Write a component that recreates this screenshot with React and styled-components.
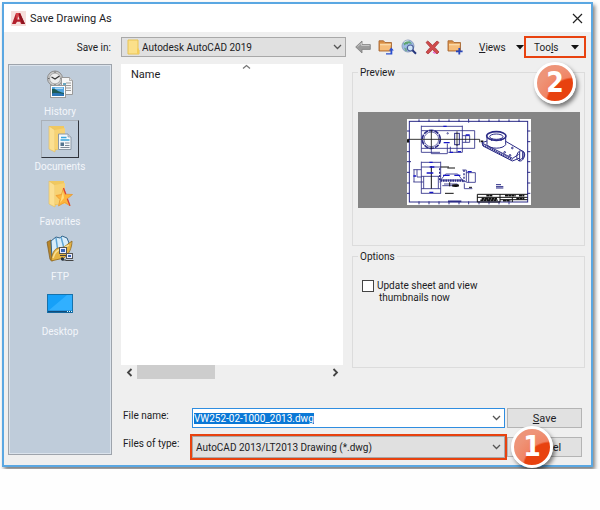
import React, { useEffect, useRef, useState } from "react";
import styled, { createGlobalStyle } from "styled-components";

const face = "#efefef";
const ink = "#1c1c24";
const accent = "#e8420f";
const winBlue = "#5aa7e2";
const navy = "#2b2b86";

const folders = ["Autodesk AutoCAD 2019"];
const fileTypes = ["AutoCAD 2013/LT2013 Drawing (*.dwg)"];

export default function App() {
  const [current, setCurrent] = useState("Documents");
  const [fileName, setFileName] = useState("VW252-02-1000_2013.dwg");
  const nameInput = useRef(null);

  useEffect(() => {
    nameInput.current.focus();
    nameInput.current.select();
  }, []);

  return (
    <>
      <GlobalStyle />
      <Dialog role="dialog" aria-labelledby="dialog-title">
        <TitleBar>
          <AppLogo />
          <Title id="dialog-title">Save Drawing As</Title>
          <CloseButton aria-label="Close">
            <CloseIcon />
          </CloseButton>
        </TitleBar>

        <Toolbar>
          <SaveInLabel htmlFor="save-in">Save in:</SaveInLabel>
          <Combo>
            <ComboIcon>
              <SmallFolder />
            </ComboIcon>
            <Select id="save-in" $indent>
              {folders.map(name => (
                <option key={name}>{name}</option>
              ))}
            </Select>
            <ComboArrow>
              <Chevron />
            </ComboArrow>
          </Combo>
          <Tools>
            <IconButton aria-label="Back">
              <BackIcon />
            </IconButton>
            <IconButton aria-label="Up one level">
              <FolderIcon up />
            </IconButton>
            <IconButton aria-label="Search the Web">
              <GlobeIcon />
            </IconButton>
            <IconButton aria-label="Delete">
              <DeleteIcon />
            </IconButton>
            <IconButton aria-label="Create New Folder">
              <FolderIcon />
            </IconButton>
            <Spacer />
            <MenuButton>
              <span>
                <u>V</u>iews
              </span>
              <Triangle />
            </MenuButton>
            <Callout>
              <MenuButton $marked>
                <span>
                  Too<u>l</u>s
                </span>
                <Triangle />
              </MenuButton>
              <StepBadge $below>2</StepBadge>
            </Callout>
          </Tools>
        </Toolbar>

        <Content>
          <Places>
            {places.map(({ name, Icon }) => (
              <Place key={name} onClick={() => setCurrent(name)}>
                <PlaceIcon $active={name === current}>
                  <Icon />
                </PlaceIcon>
                <PlaceName>{name}</PlaceName>
              </Place>
            ))}
          </Places>

          <Main>
            <Browser>
              <FileList>
                <Files>
                  <thead>
                    <tr>
                      <NameHead scope="col">
                        Name
                        <SortMark>
                          <Chevron up />
                        </SortMark>
                      </NameHead>
                    </tr>
                  </thead>
                </Files>
                <ScrollBar>
                  <ScrollArrow aria-label="Scroll left">
                    <ScrollChevron left />
                  </ScrollArrow>
                  <Track>
                    <Thumb />
                  </Track>
                  <ScrollArrow aria-label="Scroll right">
                    <ScrollChevron />
                  </ScrollArrow>
                </ScrollBar>
              </FileList>

              <Side>
                <Group>
                  <Legend>Preview</Legend>
                  <PreviewArea>
                    <Drawing />
                  </PreviewArea>
                </Group>
                <Group $grow>
                  <Legend>Options</Legend>
                  <CheckRow>
                    <CheckBox type="checkbox" id="thumbs" />
                    <CheckLabel htmlFor="thumbs">
                      Update sheet and view
                      <br />
                      thumbnails now
                    </CheckLabel>
                  </CheckRow>
                </Group>
              </Side>
            </Browser>

            <Form>
              <FieldLabel htmlFor="file-name">File name:</FieldLabel>
              <Frame>
                <Combo $edit>
                  <NameInput
                    id="file-name"
                    ref={nameInput}
                    value={fileName}
                    onChange={e => setFileName(e.target.value)}
                  />
                  <ComboArrow>
                    <Chevron />
                  </ComboArrow>
                </Combo>
              </Frame>
              <PushButton>
                <span>
                  <u>S</u>ave
                </span>
              </PushButton>

              <FieldLabel htmlFor="file-type">Files of type:</FieldLabel>
              <Frame $marked>
                <Combo $tall>
                  <Select id="file-type">
                    {fileTypes.map(type => (
                      <option key={type}>{type}</option>
                    ))}
                  </Select>
                  <ComboArrow>
                    <Chevron />
                  </ComboArrow>
                </Combo>
              </Frame>
              <Callout>
                <PushButton>Cancel</PushButton>
                <StepBadge>1</StepBadge>
              </Callout>
            </Form>
          </Main>
        </Content>
      </Dialog>
    </>
  );
}

/* icons */

function AppLogo() {
  return (
    <svg width="15" height="15" viewBox="0 0 15 15">
      <rect width="15" height="15" fill="#f6dfdc" />
      <path d="M1 13 5 2h4l5 11h-4l-.8-2.2H6L4.600 13z" fill="#b3202c" />
      <path d="M5 2h4l1.200 2.600L5.500 8z" fill="#d8434a" />
      <path d="M7.300 5.200 8.600 8.600H6.300z" fill="#f6dfdc" />
      <path d="M9 2l5 11h-3L7.500 3z" fill="#8e1420" />
    </svg>
  );
}

function CloseIcon() {
  return (
    <svg width="11" height="11" viewBox="0 0 11 11">
      <path d="M1 1l9 9M10 1l-9 9" stroke="#222" strokeWidth="1.200" />
    </svg>
  );
}

function Chevron({ up }) {
  return (
    <svg width="9" height="6" viewBox="0 0 9 6" fill="none">
      <path
        d={up ? "M1 4.500 4.500 1.500 8 4.500" : "M1 1l3.500 3.500L8 1"}
        stroke={up ? "#777" : "#555"}
        strokeWidth="1.300"
      />
    </svg>
  );
}

function ScrollChevron({ left }) {
  return (
    <svg width="7" height="9" viewBox="0 0 7 9" fill="none">
      <path
        d={left ? "M5.500 1 2 4.500 5.500 8" : "M1.500 1 5 4.500 1.500 8"}
        stroke="#444"
        strokeWidth="1.800"
      />
    </svg>
  );
}

function Triangle() {
  return (
    <svg width="8" height="5" viewBox="0 0 8 5">
      <path d="M0 0h8L4 4.500z" fill="#111" />
    </svg>
  );
}

function SmallFolder() {
  return (
    <svg width="13" height="16" viewBox="0 0 13 16">
      <path d="M1 1h10v9l1 1v4H1z" fill="#fbe08a" stroke="#e9c453" />
      <path d="M10 9.500h2V15h-2z" fill="#f3cd5c" />
    </svg>
  );
}

function BackIcon() {
  return (
    <svg width="16" height="14" viewBox="0 0 16 14">
      <path
        d="M.7 7 7 1v3.600h8.300v4.800H7V13z"
        fill="#9b9b9b"
        stroke="#7f7f7f"
        strokeWidth=".8"
      />
      <path d="M2.500 6.600 6.500 3v2.500h8" stroke="#c4c4c4" fill="none" />
    </svg>
  );
}

function FolderIcon({ up }) {
  return (
    <svg width="16" height="16" viewBox="0 0 16 16">
      <path
        d="M1 12V1.800h4.500L7 3.500h6.500V12z"
        fill="#d98f45"
        stroke="#a86a35"
        strokeWidth=".9"
      />
      <path d="M2 4.800h10.800l-.6 6.500H2z" fill="#f6bd7a" />
      <path d="M2 4.800h10.800v1.500H2z" fill="#fbd9a8" />
      {up ? (
        <path
          d="M8 14.200h4.500V11.500H10.800L13.300 8.500l2.500 3h-1.500v4.100H8z"
          fill="#2a4fcf"
        />
      ) : (
        <path d="M12.300 9v6.600M9 12.300h6.600" stroke="#2a46b8" strokeWidth="1.800" />
      )}
    </svg>
  );
}

function GlobeIcon() {
  return (
    <svg width="16" height="16" viewBox="0 0 16 16">
      <circle cx="7" cy="7" r="6" fill="#9cbbe3" stroke="#8fa1bf" />
      <path
        d="M2.500 4.500c2-3 5-3 7-1.500l1.500 2-2-.5L7.500 4 6.500 5.500 5 5 3.500 6.500z"
        fill="#5fa473"
      />
      <path d="M3 8.500l2.500 1 .5 2.500-1.500.3z" fill="#6fa98c" />
      <path d="M3 3.500C4.500 2 6 1.800 7.500 2" stroke="#e3f2ee" fill="none" />
      <circle
        cx="9.300"
        cy="9"
        r="3"
        fill="#cfe5f8"
        stroke="#4a5c98"
        strokeWidth="1.200"
      />
      <path d="M11.500 11.300l3.500 3.500" stroke="#24357c" strokeWidth="2" />
    </svg>
  );
}

function DeleteIcon() {
  return (
    <svg width="15" height="15" viewBox="0 0 15 15">
      <path
        d="M1 2.500 2.800 1l4.700 4.300L12 1l2 1.500L9.700 7.300 14 12l-2 2-4.500-4.300L3 14l-2-1.800 4.300-4.900z"
        fill="#d04a4c"
        stroke="#a83c3e"
        strokeWidth=".8"
      />
      <path d="M8 12l2.500 1.500" stroke="#e857d8" strokeWidth="1.200" />
    </svg>
  );
}

function HistoryIcon() {
  return (
    <svg width="28" height="28" viewBox="0 0 28 28">
      <circle cx="9" cy="8.500" r="7.500" fill="#c9c9c9" stroke="#8c8c8c" />
      <circle cx="9" cy="8.500" r="5.400" fill="#ededed" stroke="#aaa" />
      <path d="M5.500 7 9 9l4.500-3" stroke="#333" strokeWidth="1.200" fill="none" />
      <path d="M9 1.500v1.500M9 14v1.500M2 8.500h1.500M14.500 8.500H16" stroke="#666" />
      <path d="M15.500 7.500h8l3 3v14h-11z" fill="#f6f6f6" stroke="#999" />
      <path d="M23.500 7.500v3h3" fill="#ddd" stroke="#999" strokeWidth=".7" />
      <path d="M20 13h5M20 15.500h5M20 18h5M20 20.500h5" stroke="#9a9a9a" />
      <rect x="17" y="13" width="3" height="5" fill="#68a6c0" />
      <rect x="4.500" y="15.500" width="15" height="12" fill="#fff" stroke="#999" />
      <rect x="6" y="17" width="12" height="9" fill="#54a7e3" />
      <path d="M6 19c3-1.500 5 2.500 12 4v3H6z" fill="#1d5b55" />
      <path d="M6 23.500c4-1 8 0 12 .5v2H6z" fill="#2b76b7" />
      <path d="M9 18.200h8" stroke="#d9edfa" />
    </svg>
  );
}

function BigFolder() {
  return (
    <>
      <path d="M3 1h14v22L6 26z" fill="#f0c860" />
      <path d="M2 1l6 4v22l-6-3z" fill="#fbdf91" stroke="#e4bd58" strokeWidth=".6" />
      <path d="M8 5l10-2v21H8z" fill="#f7d273" />
    </>
  );
}

function DocumentsIcon() {
  return (
    <svg width="26" height="28" viewBox="0 0 26 28">
      <BigFolder />
      <path d="M11.500 9h9.500l3 3v12.500H11.500z" fill="#f5f8fb" stroke="#8b98a5" />
      <path d="M21 9v3h3" fill="#ccd" stroke="#8b98a5" strokeWidth=".7" />
      <path d="M14 12.500h5.500M13.500 15h9" stroke="#3aa5dc" strokeWidth="1.600" />
      <path d="M18 18h4.500M18 20.500h4.500M13.500 22.500h9" stroke="#7e8a97" />
      <path d="M13.500 17.500h3.500v3.500h-3.500z" fill="#54748e" />
    </svg>
  );
}

function FavoritesIcon() {
  return (
    <svg width="26" height="28" viewBox="0 0 26 28">
      <BigFolder />
      <path
        d="M16.500 8l2.300 6.200 6.700.3-5.200 4.300 2.700 7-5.500-3.300L11.500 26l1.500-6.500-4-4 5.500-1z"
        fill="#fdb53c"
        stroke="#e8932a"
        strokeWidth=".7"
      />
      <path d="M16.500 8l2.300 6.200M20.300 18.800l2.700 7" stroke="#d8403a" strokeWidth="1.200" />
      <path d="M16 11l1 7-4 5 1-3.500z" fill="#ffdc7d" />
    </svg>
  );
}

function FtpIcon() {
  return (
    <svg width="28" height="28" viewBox="0 0 28 28">
      <path d="M1 7l4-2 2 21-3-1.500z" fill="#b9862a" stroke="#7c5a20" strokeWidth=".7" />
      <path d="M5 6l5-4 4 1 2-2 5 2 2 5-6 10-11 5z" fill="#d8ecf9" stroke="#33658b" />
      <path d="M10 3l2 14M15 2l3 11" stroke="#5fa6d6" strokeWidth="1.500" />
      <path
        d="M5 26C6 19 8 14 12 13l6-1 8-6c0 7-3 13-8 17z"
        fill="#e4b343"
        stroke="#94691c"
        strokeWidth=".8"
      />
      <path d="M7 23c2-6 4-8 9-9l7-4" stroke="#f9df92" strokeWidth="1.500" fill="none" />
      <rect x="13.500" y="12.500" width="7" height="6" fill="#eef" stroke="#555" />
      <rect x="15" y="14" width="4" height="3" fill="#3766b8" />
      <rect x="20.500" y="18.500" width="6" height="5" fill="#eef" stroke="#555" />
      <rect x="22" y="20" width="3" height="2" fill="#3766b8" />
      <path d="M14 20.500h6M19.500 25.500h8M16 22v3h4" stroke="#444" fill="none" />
      <circle cx="16.500" cy="24" r="1.600" fill="#234" />
    </svg>
  );
}

function DesktopIcon() {
  return (
    <svg width="26" height="20" viewBox="0 0 26 20">
      <rect x=".5" y=".5" width="25" height="18" fill="#16a0f8" stroke="#1672ac" />
      <path d="M1 17 20 1h5v16z" fill="#31b0ff" />
      <path d="M1 17.500h24" stroke="#124b78" strokeWidth="1.500" />
      <path d="M20 17.500h1M22 17.500h1M24 17.500h1" stroke="#dff" />
    </svg>
  );
}

const places = [
  { name: "History", Icon: HistoryIcon },
  { name: "Documents", Icon: DocumentsIcon },
  { name: "Favorites", Icon: FavoritesIcon },
  { name: "FTP", Icon: FtpIcon },
  { name: "Desktop", Icon: DesktopIcon }
];

/* the sheet shown in the preview pane, three units to a pixel */
function Drawing() {
  return (
    <svg width="124" height="86" viewBox="24 27 372 258" fill="none">
      <rect x="24" y="27" width="372" height="258" fill="#fff" />
      <rect x="31" y="34" width="355" height="242" stroke={navy} strokeWidth="3" />
      <path
        d="M60 28v8M90 28v8M120 28v8M150 28v8M180 28v8M209 26v12M240 28v8M270 28v8M300 28v8M330 28v8M360 28v8M60 274v9M90 274v9M120 274v9M150 274v9M180 274v9M209 274v9M240 274v9M270 274v9M300 274v9M330 274v9M24 63h8M24 95h8M24 125h8M24 155h12M24 187h8M24 219h8M24 250h8M385 63h9M385 95h9M385 125h9M385 155h9M385 187h9M385 219h9M385 250h9"
        stroke={navy}
        strokeWidth="3"
      />

      {/* top view */}
      <g stroke={navy} strokeWidth="2.500">
        <path d="M67 47v80M190 47v80M67 49h123M67 62h160v53M67 115h160M67 127h56M97 115v16h48v-30M148 127h42M154 110v18M174 105v22M190 77h22v20h-22M200 77v20" />
        <rect x="167" y="70" width="14" height="34" strokeWidth="3" />
        <circle cx="97" cy="88" r="27" strokeWidth="5" strokeDasharray="14 3" />
        <circle cx="97" cy="88" r="22" strokeWidth="2" />
        <circle cx="146" cy="70" r="2" />
      </g>
      <path d="M26 88h216M97 60v57M242 88v9M174 64v44" stroke="#111" strokeWidth="2.500" />
      <path d="M24 90h6M24 95h6M245 94h8" stroke="#111" strokeWidth="5" />
      <path
        d="M133 49h10M134 98h18M200 75h12M152 127h10M176 125h10"
        stroke="#1515c8"
        strokeWidth="4"
      />

      {/* section */}
      <g stroke={navy} strokeWidth="2.500">
        <path d="M67 155v96M125 155v96M67 157h58M67 171h58M67 199h58M74 199v37M118 199v37M67 236h58M67 250h58M43 179h24M43 216h30M45 179v37M54 179v22h14M125 210h65l-14-18h-36zM190 180h12v35h-12M202 188h27v29h-27M209 188v29M196 220v16h24M135 222h40v5h-45" />
        <path d="M125 212h70" strokeWidth="7" strokeDasharray="5 2" />
        <path d="M122 175v42M195 180v34" strokeWidth="4" strokeDasharray="6 4" />
      </g>
      <path
        d="M97 168v68M145 174h23M125 171h25M160 226h20M138 250h26M152 217v12M210 232h9"
        stroke="#111"
        strokeWidth="3"
      />
      <path d="M160 227h19M170 223v8" stroke="#111" strokeWidth="7" />
      <path
        d="M91 157h10M83 189h20M92 171h14M91 247h12M43 198h8M206 185h12M132 196h20M166 196h18"
        stroke="#1515c8"
        strokeWidth="4"
      />

      {/* isometric view */}
      <g stroke={navy} strokeWidth="3">
        <ellipse cx="292" cy="78" rx="29" ry="13" strokeWidth="5" />
        <ellipse cx="292" cy="80" rx="20" ry="8" />
        <path d="M264 80v24c8 14 48 14 56 0V80M278 86v7M306 86v7" />
        <path d="M264 93l-15 5 3 10 88 45 20-8M320 94l55 32v14l-15 13M249 99l92 46 18-12" />
        <path d="M252 105l88 44" strokeDasharray="4 2" strokeWidth="5" />
        <path d="M354 146c-3-8 2-21 8-23s16 3 15 12-7 18-13 18-9-3-10-7zM362 124v27M371 126v22" />
        <circle cx="340" cy="114" r="2.500" />
        <circle cx="317" cy="127" r="2.500" />
        <circle cx="333" cy="136" r="2.500" />
      </g>

      {/* notes and title block */}
      <path d="M291 224h15M291 230h22M291 234h22" stroke={navy} strokeWidth="3" />
      <path d="M147 274h40" stroke={navy} strokeWidth="5" />
      <path
        d="M235 253h151M235 253v23M235 262h151M303 253v23M235 276h68M340 262v14M303 269h83"
        stroke="#111"
        strokeWidth="3"
      />
      <path
        d="M248 266h46M244 271h52M262 257h18M318 257h32M360 257h16M312 272h22M352 266h24"
        stroke="#111"
        strokeWidth="5"
        strokeDasharray="9 1"
      />
    </svg>
  );
}

/* styles */

const GlobalStyle = createGlobalStyle`
  * {
    box-sizing: border-box;
  }
  body {
    margin: 0;
    background: #fefefe;
    color: ${ink};
    font-family: Roboto, "Liberation Sans", sans-serif;
    font-size: 10px;
    line-height: 13px;
  }
  button, input, select {
    margin: 0;
    color: inherit;
    font: inherit;
    border-radius: 0;
  }
  svg {
    display: block;
    flex: none;
  }
`;

const Dialog = styled.div`
  margin: 2px 7px 2px 2px;
  background: ${face};
  border: 2px solid ${winBlue};
  box-shadow: 2px 3px 4px rgba(0, 0, 0, 0.5);
`;

const TitleBar = styled.header`
  display: flex;
  align-items: center;
  gap: 4px;
  height: 28px;
  padding: 0 6px 0 7px;
  background: #fff;
`;

const Title = styled.h1`
  flex: 1;
  margin: 0;
  font-size: 11px;
  font-weight: 400;
`;

const CloseButton = styled.button`
  padding: 2px;
  background: none;
  border: none;
`;

const Toolbar = styled.div`
  display: flex;
  align-items: center;
  padding: 4px 5px 6px 4px;
`;

const SaveInLabel = styled.label`
  width: 113px;
  padding-right: 10px;
  text-align: right;
`;

const Combo = styled.div`
  position: relative;
  display: flex;
  flex: 1;
  align-items: center;
  height: ${props => (props.$tall ? "22px" : "20px")};
  background: ${props => (props.$edit ? "#fff" : "#e0e0e0")};
  border: 1px solid ${props => (props.$edit ? "#2f8de0" : "#a8a8a8")};
`;

const ComboIcon = styled.span`
  position: absolute;
  left: 5px;
`;

const ComboArrow = styled.span`
  position: absolute;
  right: 3px;
  pointer-events: none;
`;

const Select = styled.select`
  width: 100%;
  height: 100%;
  padding: 0 18px 0 ${props => (props.$indent ? "20px" : "3px")};
  appearance: none;
  background: none;
  border: none;
  outline: none;
`;

const Tools = styled.div`
  display: flex;
  align-items: center;
  gap: 7px;
  width: 240px;
  padding-left: 9px;
`;

const IconButton = styled.button`
  display: flex;
  align-items: center;
  justify-content: center;
  width: 16px;
  height: 20px;
  padding: 0;
  background: none;
  border: none;
`;

const Spacer = styled.span`
  flex: 1;
`;

const MenuButton = styled.button`
  display: flex;
  align-items: center;
  justify-content: space-between;
  width: ${props => (props.$marked ? "62px" : "45px")};
  height: 22px;
  margin-right: ${props => (props.$marked ? "0" : "-7px")};
  padding: ${props => (props.$marked ? "0 5px 0 8px" : "0")};
  background: none;
  border: ${props => (props.$marked ? `2px solid ${accent}` : "none")};
`;

const Callout = styled.div`
  position: relative;
  display: flex;
  align-items: center;
`;

const StepBadge = styled.span`
  position: absolute;
  top: ${props => (props.$below ? "26px" : "-8px")};
  left: ${props => (props.$below ? "10px" : "4px")};
  z-index: 1;
  display: flex;
  align-items: center;
  justify-content: center;
  width: 42px;
  height: 42px;
  color: #fff;
  background: radial-gradient(
    circle at 36px 40px,
    ${accent} 26px,
    #f08464 28px,
    #ee9478 40px
  );
  border: 3px solid #fff;
  border-radius: 50%;
  box-shadow: 2px 3px 4px rgba(0, 0, 0, 0.5);
  font-family: "DejaVu Sans Condensed", "DejaVu Sans", sans-serif;
  font-size: 28px;
  font-weight: 700;
  line-height: 36px;
`;

const Content = styled.div`
  display: flex;
  gap: 9px;
  padding: 0 6px 5px 4px;
`;

const Places = styled.nav`
  width: 104px;
  margin-bottom: 5px;
  background: #bfccda;
  border: 1px solid #9ea4ac;
  box-shadow: inset 0 0 0 1px #dbe3ec;
`;

const Place = styled.button`
  display: flex;
  flex-direction: column;
  align-items: center;
  width: 100%;
  height: 55px;
  padding: 0;
  background: none;
  border: none;
`;

const PlaceIcon = styled.span`
  display: flex;
  align-items: center;
  justify-content: center;
  width: 38px;
  height: 38px;
  border: 1px solid;
  border-color: ${props =>
    props.$active ? "#a9b0b8 #30343c #30343c #a9b0b8" : "transparent"};
`;

const PlaceName = styled.span`
  color: #f3f6fa;
  line-height: 17px;
`;

const Main = styled.main`
  display: flex;
  flex: 1;
  flex-direction: column;
  min-width: 0;
`;

const Browser = styled.div`
  display: flex;
  gap: 9px;
`;

const FileList = styled.div`
  display: flex;
  flex: 1;
  flex-direction: column;
`;

const Files = styled.table`
  display: block;
  height: 301px;
  background: #fff;
  border-collapse: collapse;

  thead,
  tr {
    display: block;
  }
`;

const NameHead = styled.th`
  position: relative;
  display: block;
  padding: 4px 10px;
  font-size: 11px;
  font-weight: 400;
  text-align: left;
`;

const SortMark = styled.span`
  position: absolute;
  top: 0;
  right: 92px;
`;

const ScrollBar = styled.div`
  display: flex;
  height: 14px;
`;

const ScrollArrow = styled.button`
  display: flex;
  align-items: center;
  justify-content: center;
  width: 16px;
  padding: 0;
  background: none;
  border: none;
`;

const Track = styled.div`
  flex: 1;
`;

const Thumb = styled.div`
  width: 41%;
  height: 100%;
  background: #cdcdcd;
`;

const Side = styled.div`
  display: flex;
  flex-direction: column;
  gap: 4px;
  width: 233px;
  padding-top: 2px;
`;

const Group = styled.fieldset`
  min-width: 0;
  height: ${props => (props.$grow ? "118px" : "180px")};
  margin: 0;
  padding: 0 4px 0 5px;
  border: 1px solid #dcdcdc;
`;

const Legend = styled.legend`
  padding: 0 2px;
`;

const PreviewArea = styled.div`
  display: flex;
  justify-content: center;
  margin-top: 33px;
  padding: 7px 0 3px;
  background: #858585;
`;

const CheckRow = styled.div`
  display: flex;
  gap: 3px;
  margin-top: 17px;
  padding-left: 4px;
`;

const CheckBox = styled.input`
  width: 12px;
  height: 12px;
  margin: 0;
  appearance: none;
  background: #fff;
  border: 1px solid #444;

  &:checked {
    background: #444;
  }
`;

const CheckLabel = styled.label`
  padding-left: 2px;
  line-height: 12px;
  text-indent: -2px;
`;

const Form = styled.div`
  display: grid;
  grid-template-columns: 69px 1fr 75px;
  row-gap: 4px;
  margin-top: 27px;
  padding-right: 3px;
`;

const FieldLabel = styled.label`
  padding: 3px 0 0 2px;
`;

const Frame = styled.div`
  display: flex;
  border: 2px solid ${props => (props.$marked ? accent : "transparent")};
`;

const NameInput = styled.input`
  width: 100%;
  height: 100%;
  padding: 0 18px 0 1px;
  background: none;
  border: none;
  outline: none;

  &::selection {
    color: #fff;
    background: #0a78d6;
  }
`;

const PushButton = styled.button`
  align-self: center;
  width: 100%;
  height: 20px;
  padding: 0;
  background: #e1e1e1;
  border: 1px solid #b4b4b4;
  font-size: 11px;
`;
